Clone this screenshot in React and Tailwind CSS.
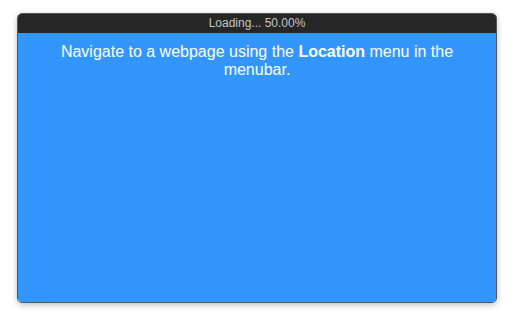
export default function App() {
    return (
        <div className="w-[514px] h-[323px] bg-white pt-[13px] pl-[17px]" style={{ fontFamily: '"Liberation Sans", Arial, sans-serif' }}>
            <div className="w-[480px] h-[290px] rounded-[5px] overflow-hidden border border-[#555] flex flex-col shadow-[0_2px_6px_rgba(0,0,0,0.25)]">
                <div className="h-[19px] bg-[#262626] text-[#c4c4c4] text-[12px] leading-[19px] text-center shrink-0">
                    Loading... 50.00%
                </div>
                <div className="flex-1 bg-[#3396ff] text-white text-[16px] leading-[18px] text-center px-6 pt-[10px]">
                    Navigate to a webpage using the <b>Location</b> menu in the menubar.
                </div>
            </div>
        </div>
    );
}
